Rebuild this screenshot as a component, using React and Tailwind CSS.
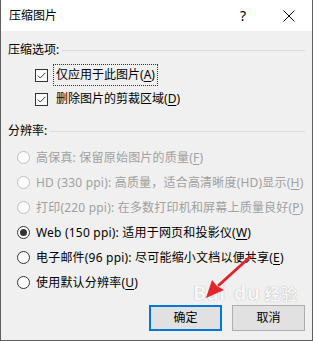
import React from "react";

const font = "font-['Segoe_UI','Noto_Sans','Noto_Sans_CJK_SC',sans-serif]";

function Check() {
  return (
    <div className="w-[13px] h-[13px] border border-[#333333] bg-white flex items-center justify-center shrink-0">
      <svg width="11" height="11" viewBox="0 0 11 11">
        <path d="M1.8 5.6 L4.2 8 L9.3 2.9" fill="none" stroke="#333333" strokeWidth="1" />
      </svg>
    </div>
  );
}

function Radio({ checked, disabled }) {
  return (
    <div
      className={
        "w-[13px] h-[13px] rounded-full border flex items-center justify-center shrink-0 " +
        (disabled ? "border-[#bfbfbf] bg-[#fcfcfc]" : "border-[#333333] bg-white")
      }
    >
      {checked && <div className="w-[7px] h-[7px] rounded-full bg-[#333333]" />}
    </div>
  );
}

function Acc({ k }) {
  return (
    <span>
      (<u className="underline underline-offset-2 decoration-1">{k}</u>)
    </span>
  );
}

function GroupHeader({ label, className }) {
  return (
    <div className={"flex items-center h-[16px] pl-[7px] pr-[7px] " + (className || "")}>
      <span className="text-[12px] leading-[16px] text-black whitespace-nowrap">{label}</span>
      <div className="flex-1 h-px bg-[#dcdcdc] ml-[3px]" />
    </div>
  );
}

function RadioRow({ checked, disabled, children }) {
  return (
    <div className="flex items-center h-[25px] pl-[16px]">
      <Radio checked={checked} disabled={disabled} />
      <span
        className={
          "ml-[6px] text-[12px] leading-[16px] whitespace-nowrap tracking-[0.2px] " +
          (disabled ? "text-[#a0a0a0]" : "text-black")
        }
      >
        {children}
      </span>
    </div>
  );
}

export default function App() {
  return (
    <div className={"relative w-[313px] h-[341px] bg-[#f0f0f0] border-l border-r border-b border-[#606060] overflow-hidden " + font}>
      {/* Title bar */}
      <div className="h-[31px] bg-white flex items-center pl-[8px] pr-[10px]">
        <span className="text-[12px] leading-[16px] text-black">压缩图片</span>
        <div className="flex-1" />
        <span className="text-[14px] leading-[16px] text-black mr-[37px]">?</span>
        <svg width="12" height="12" viewBox="0 0 12 12" className="mr-[7px]">
          <path d="M0.5 0.5 L11.5 11.5 M11.5 0.5 L0.5 11.5" stroke="#000" strokeWidth="1" />
        </svg>
      </div>

      <GroupHeader label="压缩选项:" className="mt-[11px]" />

      <div className="mt-[5px] flex flex-col">
        <div className="flex items-center h-[24px] pl-[34px]">
          <Check />
          <span className="ml-[5px] px-[2px] py-[2px] border border-dotted border-[#333333] text-[12px] leading-[16px] text-black whitespace-nowrap">
            仅应用于此图片<Acc k="A" />
          </span>
        </div>
        <div className="flex items-center h-[24px] pl-[34px]">
          <Check />
          <span className="ml-[8px] text-[12px] leading-[16px] text-black whitespace-nowrap">
            删除图片的剪裁区域<Acc k="D" />
          </span>
        </div>
      </div>

      <GroupHeader label="分辨率:" className="mt-[12px]" />

      <div className="mt-[6px] flex flex-col">
        <RadioRow disabled>
          高保真: 保留原始图片的质量<Acc k="F" />
        </RadioRow>
        <RadioRow disabled>
          HD (330 ppi): 高质量，适合高清晰度(HD)显示<Acc k="H" />
        </RadioRow>
        <RadioRow disabled>
          打印(220 ppi): 在多数打印机和屏幕上质量良好<Acc k="P" />
        </RadioRow>
        <RadioRow checked>
          Web (150 ppi): 适用于网页和投影仪<Acc k="W" />
        </RadioRow>
        <RadioRow>
          电子邮件(96 ppi): 尽可能缩小文档以便共享<Acc k="E" />
        </RadioRow>
        <RadioRow>
          使用默认分辨率<Acc k="U" />
        </RadioRow>
      </div>

      <div className="mt-[10px] flex justify-end gap-[10px] pr-[7px]">
        <button className="w-[73px] h-[26px] border-2 border-[#0078d7] bg-[#e1e1e1] text-[12px] leading-[16px] text-black">
          确定
        </button>
        <button className="w-[73px] h-[26px] border border-[#adadad] bg-[#e1e1e1] text-[12px] leading-[16px] text-black">
          取消
        </button>
      </div>

      {/* watermark */}
      <div className="absolute left-[192px] top-[283px] text-[20px] leading-[20px] font-bold text-[#f7f7f7] tracking-wide pointer-events-none [text-shadow:0_0_1px_#9a9a9a]">
        Bai<span className="ml-[8px]">du</span><span className="ml-[4px] text-[16px]">经验</span>
      </div>

      {/* red arrow */}
      <svg className="absolute left-0 top-0 pointer-events-none" width="313" height="341" viewBox="0 0 313 341">
        <path d="M249 257 L218 285" stroke="#e3262b" strokeWidth="3" strokeLinecap="round" fill="none" />
        <path d="M205 298 L211 280 L216 286 L223 290 Z" fill="#e3262b" />
      </svg>
    </div>
  );
}
